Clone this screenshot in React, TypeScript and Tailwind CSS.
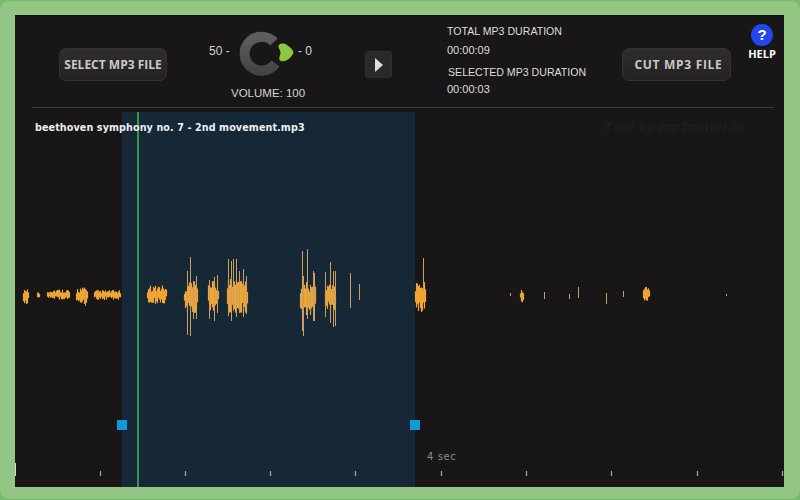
import React from "react";

type Cluster = [number, number, number, number];
const clusters: Cluster[] = [
  [23, 28, 288, 303], [37, 39, 290, 298], [47, 69, 288, 299], [76, 87, 286, 303], [94, 120, 289, 299],
  [147, 166, 284, 303], [184, 197, 280, 312], [208, 218, 278, 310], [227, 247, 276, 314],
  [300, 315, 278, 316], [325, 335, 282, 310], [415, 425, 280, 311],
  [520, 523, 288, 302], [643, 649, 284, 301],
];
const tall: [number, number, number][] = [
  [190, 256, 335], [187, 270, 334], [196, 275, 318], [193, 280, 318], [209, 279, 318], [214, 276, 320], [217, 274, 312],
  [228, 258, 315], [231, 260, 320], [233, 258, 310], [236, 258, 316], [239, 270, 312], [243, 268, 316], [246, 275, 313],
  [302, 250, 330], [303, 275, 335], [307, 248, 318], [310, 285, 312], [313, 270, 320], [314, 272, 320],
  [325, 271, 316], [330, 261, 322], [333, 270, 326], [335, 270, 325], [350, 272, 307], [359, 283, 299], [423, 257, 290],
  [85, 290, 305], [510, 292, 295], [544, 291, 298], [569, 293, 298], [578, 286, 297], [606, 292, 303], [623, 290, 296], [726, 293, 295],
];

const bars: { x: number; y1: number; y2: number; tall?: boolean }[] = [];
clusters.forEach(([a, b, t, m]) => {
  const c = (t + m) / 2;
  const h = (m - t) / 2;
  for (let x = a; x <= b; x++) {
    const j = Math.abs(Math.sin(x * 12.9898) * 43758.5453) % 1;
    const k = Math.abs(Math.sin(x * 78.233) * 12543.123) % 1;
    const edge = Math.min(1, 0.45 + (Math.min(x - a, b - x) + 0.5) / 3);
    bars.push({ x, y1: c - h * edge * (0.3 + 0.7 * j), y2: c + h * edge * (0.3 + 0.7 * k) });
  }
});
tall.forEach(([x, y1, y2]) => bars.push({ x, y1, y2, tall: true }));

const ticks = [100, 185, 270, 355, 441, 526, 611, 697, 782];

function Btn({ children, w, className }: { children: React.ReactNode; w: string; className: string }) {
  return (
    <div className={`${w} h-[33px] flex items-center justify-center rounded-[7px] border border-[#343333] bg-gradient-to-b from-[#2f2d2d] to-[#232121] text-[#c9c9c9] font-bold text-[12px] ${className}`} style={{ fontFamily: '"Open Sans", sans-serif' }}>
      {children}
    </div>
  );
}

export default function App() {
  return (
    <div className="w-[800px] h-[500px] bg-[#76bb6a] overflow-hidden" style={{ fontFamily: '"Liberation Sans", sans-serif' }}>
      <div className="w-[800px] h-[498px] mt-[1px] rounded-[9px] bg-[#93c685] pt-[14px] px-[15px] pb-[12px]">
        <div className="w-[769px] h-[472px] bg-[#181617] border-t border-[#0c110c] flex flex-col">
          {/* header */}
          <div className="h-[92px] shrink-0 ml-[17px] mr-[10px] border-b border-[#3a3838] flex items-start">
            <div className="ml-[27px] mt-[32px] shrink-0"><Btn w="w-[108px]" className="">SELECT MP3 FILE</Btn></div>

            <div className="ml-[42px] mt-[14px] w-[104px] shrink-0 flex flex-col text-[#d4d4d4] whitespace-nowrap">
              <div className="flex items-center text-[12px]">
                <span className="w-[29px] shrink-0 pb-[6px]">50 -</span>
                <svg className="shrink-0" width="58" height="48" viewBox="238 30 58 48">
                  <defs>
                    <linearGradient id="r" x1="0" y1="0" x2="0" y2="1">
                      <stop offset="0" stopColor="#5e5e5e" />
                      <stop offset="1" stopColor="#454545" />
                    </linearGradient>
                  </defs>
                  <path d="M274 42 A 17 17 0 1 0 275.5 63.5" fill="none" stroke="url(#r)" strokeWidth="10" />
                  <path d="M283 43.5 C286 43.5 287 45 289 46.5 C291 48 293 50 293.5 52.5 C292.5 55 290 59 287 60 C285 61.5 281 62 279.5 60 C278.5 58 280.5 55.5 280.5 52.5 C280.5 50 278 48 278.5 46 C279 44 281 43.5 283 43.5 Z" fill="#8dc63f" />
                </svg>
                <span className="ml-[2px] shrink-0 pb-[6px]">- 0</span>
              </div>
              <span className="ml-[22px] mt-[7px] text-[11.5px]">VOLUME: 100</span>
            </div>

            <div className="ml-[52px] mt-[35px] w-[27px] h-[27px] shrink-0 rounded-[3px] bg-[#2a2828] border border-[#302e2e] flex items-center justify-center">
              <svg width="8" height="14" viewBox="0 0 8 14"><path d="M0 0 L8 7 L0 14 Z" fill="#dcdcdc" /></svg>
            </div>

            <div className="ml-[55px] mt-[9px] w-[155px] shrink-0 flex flex-col text-[#dedede] whitespace-nowrap leading-[13px]">
              <span className="text-[10.6px]">TOTAL MP3 DURATION</span>
              <span className="text-[11px] mt-[6px]">00:00:09</span>
              <span className="text-[10.6px] mt-[9px] ml-[1px]">SELECTED MP3 DURATION</span>
              <span className="text-[11px] mt-[4px]">00:00:03</span>
            </div>

            <div className="ml-[20px] mt-[32px] shrink-0"><Btn w="w-[109px]" className="tracking-[0.7px] pl-[4px]">CUT MP3 FILE</Btn></div>

            <div className="ml-[17px] mt-[8px] w-[28px] shrink-0 flex flex-col items-center">
              <div className="w-[22px] h-[22px] rounded-full bg-[#2347ec] text-white font-bold text-[15px] flex items-center justify-center">?</div>
              <span className="text-white font-bold text-[11px] leading-[13px] mt-[1px]" style={{ fontFamily: '"Open Sans", sans-serif' }}>HELP</span>
            </div>
          </div>

          {/* waveform canvas */}
          <div className="relative flex-1">
            <div className="absolute left-[107px] top-[4px] bottom-0 w-[293px] bg-[#162736]" />
            <div className="absolute left-[122px] top-[4px] bottom-0 w-[2px] bg-[#2e9a4e]" />
            <div className="relative flex justify-between pt-[13px] pl-[20px] pr-[39px] whitespace-nowrap">
              <span className="text-[9.6px] text-[#eeeeee] tracking-[0.1px]" style={{ fontFamily: '"DejaVu Sans", sans-serif', fontWeight: 600 }}>beethoven symphony no. 7 - 2nd movement.mp3</span>
              <span className="text-[13px] italic font-bold text-[#201e1f] tracking-[0.7px] -mt-[4px]">Tool by mp3cutter.in</span>
            </div>
            <svg className="absolute left-0 top-0 blur-[0.35px]" width="769" height="379" viewBox="15 107 769 379">
              {bars.map((b, i) => (
                <line key={i} x1={b.x + 0.5} x2={b.x + 0.5} y1={b.y1} y2={b.y2} stroke={b.tall ? "#c9a05f" : "#f0a535"} strokeWidth={b.tall ? 1 : 1.2} />
              ))}
              <line x1="15.5" x2="15.5" y1="462" y2="475" stroke="#d8d8d8" />
              {ticks.map((x) => (
                <line key={x} x1={x + 0.5} x2={x + 0.5} y1="470" y2="475" stroke="#a8a8a8" strokeWidth="1.2" />
              ))}
            </svg>
            <div className="absolute left-[102px] top-[312px] w-[10px] h-[10px] bg-[#0f9bd8]" />
            <div className="absolute left-[395px] top-[312px] w-[10px] h-[10px] bg-[#0f9bd8]" />
            <span className="absolute left-[412px] top-[341px] text-[10px] text-[#8a8a8a] tracking-[0.6px]" style={{ fontFamily: '"DejaVu Sans", sans-serif' }}>4 sec</span>
          </div>
        </div>
      </div>
    </div>
  );
}
